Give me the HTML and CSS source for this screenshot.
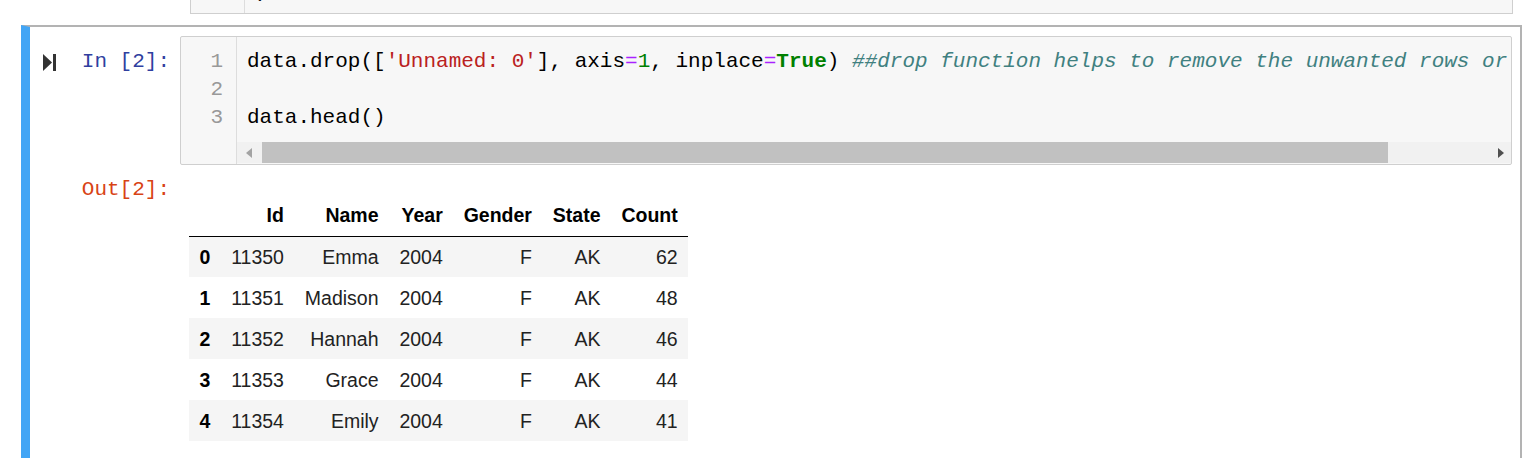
FILE: index.html
```html
<!DOCTYPE html>
<html>
<head>
<meta charset="utf-8">
<link rel="stylesheet" href="styles.css">
</head>
<body>
<div class="prev">
  <div class="prev-gutter"></div>
  <div class="prev-code"><span class="prev-line">)</span></div>
</div>
<div class="cell">
  <div class="row input-row">
    <div class="prompt in-prompt">
      <svg class="run-icon" width="14" height="17" viewBox="0 0 14 17"><path d="M0 0 L9 8.5 L0 17 Z" fill="#333"/><rect x="10" y="0" width="3" height="17" fill="#333"/></svg>
      <span class="prompt-text">In [2]:</span>
    </div>
    <div class="input-area">
      <div class="gutter">
        <div class="ln">1</div>
        <div class="ln">2</div>
        <div class="ln">3</div>
      </div>
      <div class="editor">
        <div class="lines">
          <div class="line">data.drop([<span class="s">'Unnamed: 0'</span>], axis<span class="o">=</span><span class="n">1</span>, inplace<span class="o">=</span><span class="k">True</span>) <span class="c">##drop function helps to remove the unwanted rows or columns from the dataframe</span></div>
          <div class="line">&nbsp;</div>
          <div class="line">data.head()</div>
        </div>
        <div class="scrollbar">
          <div class="sb-btn sb-left"><span class="arrow-left"></span></div>
          <div class="sb-track">
            <div class="sb-thumb"></div>
          </div>
          <div class="sb-btn sb-right"><span class="arrow-right"></span></div>
        </div>
      </div>
    </div>
  </div>
  <div class="row output-row">
    <div class="prompt out-prompt"><span class="prompt-text out">Out[2]:</span></div>
    <div class="output-area">
      <table class="df">
        <thead>
          <tr><th></th><th>Id</th><th>Name</th><th>Year</th><th>Gender</th><th>State</th><th>Count</th></tr>
        </thead>
        <tbody>
          <tr><th>0</th><td>11350</td><td>Emma</td><td>2004</td><td>F</td><td>AK</td><td>62</td></tr>
          <tr><th>1</th><td>11351</td><td>Madison</td><td>2004</td><td>F</td><td>AK</td><td>48</td></tr>
          <tr><th>2</th><td>11352</td><td>Hannah</td><td>2004</td><td>F</td><td>AK</td><td>46</td></tr>
          <tr><th>3</th><td>11353</td><td>Grace</td><td>2004</td><td>F</td><td>AK</td><td>44</td></tr>
          <tr><th>4</th><td>11354</td><td>Emily</td><td>2004</td><td>F</td><td>AK</td><td>41</td></tr>
        </tbody>
      </table>
    </div>
  </div>
</div>
</body>
</html>
```
FILE: styles.css
```css
html, body {
  margin: 0;
  padding: 0;
  background: #fff;
  overflow: hidden;
}
body {
  font-family: "Liberation Sans", Arial, sans-serif;
}
.prev {
  display: flex;
  margin-left: 190px;
  width: 1321px;
  height: 13px;
  border: 1px solid #cfcfcf;
  border-top: none;
  background: #f7f7f7;
  overflow: hidden;
  box-sizing: content-box;
}
.prev-gutter {
  width: 53px;
  border-right: 1px solid #ddd;
  flex: none;
}
.prev-code {
  font-family: "Liberation Mono", monospace;
  font-size: 21px;
  line-height: 28px;
  margin-top: -22px;
  padding-left: 10px;
  white-space: pre;
  color: #000;
}
.cell {
  margin-left: 21px;
  margin-top: 11px;
  width: 1490px;
  border-top: 2px solid #b3b3b3;
  border-right: 2px solid #b3b3b3;
  border-left: 9px solid #42a5f5;
  padding-top: 9px;
  padding-bottom: 40px;
}
.row {
  display: flex;
  align-items: flex-start;
}
.prompt {
  width: 150px;
  flex: none;
  box-sizing: border-box;
  display: flex;
  align-items: center;
  justify-content: flex-end;
  padding-right: 10px;
  font-family: "Liberation Mono", monospace;
  font-size: 21px;
  line-height: 28px;
}
.in-prompt {
  justify-content: space-between;
  padding-left: 13px;
  padding-top: 12px;
}
.run-icon {
  display: block;
}
.prompt-text {
  color: #303f9f;
}
.prompt-text.out {
  color: #d84315;
}
.input-area {
  width: 1330px;
  border: 1px solid #cfcfcf;
  border-radius: 2px;
  background: #f7f7f7;
  display: flex;
  overflow: hidden;
}
.gutter {
  width: 55px;
  flex: none;
  border-right: 1px solid #ddd;
  padding-top: 11px;
  box-sizing: content-box;
}
.ln {
  font-family: "Liberation Mono", monospace;
  font-size: 21px;
  line-height: 28px;
  color: #999;
  text-align: right;
  padding-right: 13px;
}
.editor {
  flex: 1;
  min-width: 0;
  display: flex;
  flex-direction: column;
}
.lines {
  padding: 11px 0 10px 10px;
  overflow: hidden;
}
.line {
  font-family: "Liberation Mono", monospace;
  font-size: 21px;
  line-height: 28px;
  color: #000;
  white-space: pre;
}
.s { color: #ba2121; }
.o { color: #aa22ff; }
.n { color: #008000; }
.k { color: #008000; font-weight: bold; }
.c { color: #408080; font-style: italic; }
.scrollbar {
  display: flex;
  height: 21px;
  background: #f1f1f1;
  margin-bottom: 1px;
}
.sb-btn {
  flex: none;
  display: flex;
  align-items: center;
  justify-content: center;
}
.sb-left {
  width: 24px;
}
.sb-right {
  width: 21px;
}
.arrow-left {
  width: 0;
  height: 0;
  border-top: 5px solid transparent;
  border-bottom: 5px solid transparent;
  border-right: 6px solid #a3a3a3;
}
.arrow-right {
  width: 0;
  height: 0;
  border-top: 5px solid transparent;
  border-bottom: 5px solid transparent;
  border-left: 6px solid #505050;
}
.sb-track {
  flex: 1;
  display: flex;
  align-items: stretch;
}
.sb-thumb {
  width: 1126px;
  margin-left: 1px;
  background: #c1c1c1;
}
.output-row {
  margin-top: 11px;
}
.output-area {
  padding-left: 9px;
  padding-top: 19px;
}
.df {
  border-collapse: collapse;
  border-spacing: 0;
  font-family: "Liberation Sans", Arial, sans-serif;
  font-size: 19.5px;
  color: #000;
}
.df th, .df td {
  text-align: right;
  vertical-align: middle;
  padding: 0 10.45px;
  height: 41px;
  line-height: 22px;
  white-space: nowrap;
  box-sizing: border-box;
}
.df thead th {
  font-weight: bold;
  height: 41px;
  border-bottom: 1px solid #000;
  vertical-align: bottom;
  padding-bottom: 10px;
}
.df tbody th {
  font-weight: bold;
}
.df td {
  color: #222;
}
.df tbody tr:nth-child(odd) {
  background: #f5f5f5;
}
```
